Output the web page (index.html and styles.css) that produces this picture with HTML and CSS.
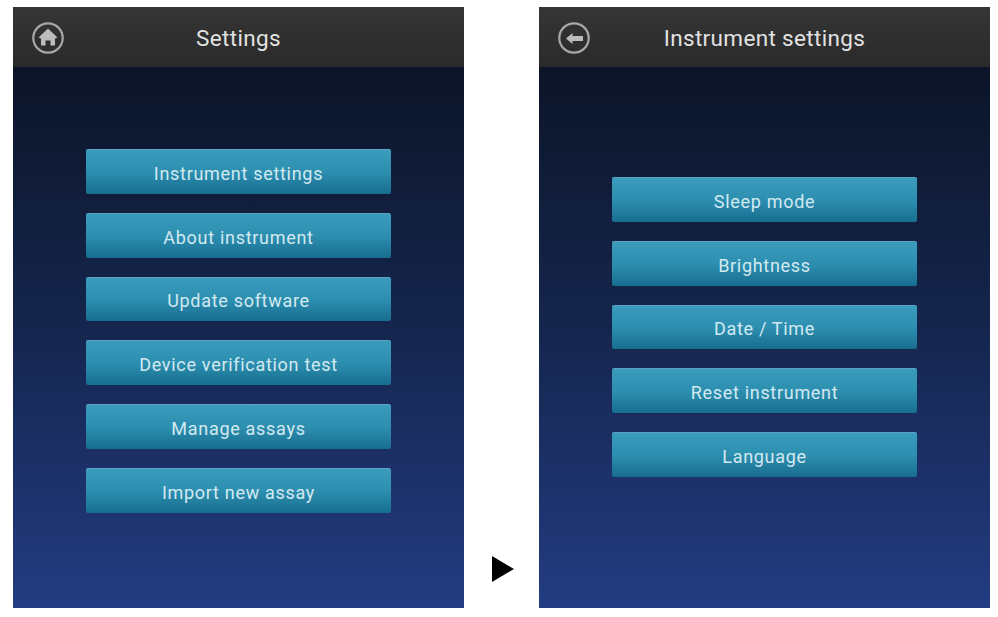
FILE: index.html
```html
<!DOCTYPE html>
<html>
<head>
	<title>Settings</title>
	<link rel="stylesheet" href="styles.css">
</head>
<body>
	<div class="screen">
		<div class="header">
			<svg class="icon" viewBox="0 0 32 32">
				<circle cx="16" cy="16" r="14.7"/>
				<path class="glyph" d="M16 6.5 L25.5 15.5 L23 16.5 L23 23.5 L18.5 23.5 L18.5 18.5 L13.5 18.5 L13.5 23.5 L9 23.5 L9 16.5 L6.5 15.5 Z"/>
			</svg>
			<h1>Settings</h1>
		</div>
		<div class="menu">
			<a class="btn">Instrument settings</a>
			<a class="btn">About instrument</a>
			<a class="btn">Update software</a>
			<a class="btn">Device verification test</a>
			<a class="btn">Manage assays</a>
			<a class="btn">Import new assay</a>
		</div>
	</div>

	<div class="arrow"></div>

	<div class="screen">
		<div class="header">
			<svg class="icon" viewBox="0 0 32 32">
				<circle cx="16" cy="16" r="14.7"/>
				<path class="glyph" d="M8 16.5 L14.5 11 L14.5 14 L25 14 L25 19 L14.5 19 L14.5 22 Z"/>
			</svg>
			<h1>Instrument settings</h1>
		</div>
		<div class="menu menu-short">
			<a class="btn">Sleep mode</a>
			<a class="btn">Brightness</a>
			<a class="btn">Date / Time</a>
			<a class="btn">Reset instrument</a>
			<a class="btn">Language</a>
		</div>
	</div>
</body>
</html>
```

FILE: styles.css
```css
body {
	font-family: Roboto, "Liberation Sans", sans-serif;
	margin: 0;
	padding: 7px 0 0 13px;
	background-color: #fff;
	display: flex;
}

.screen {
	width: 451px;
	height: 601px;
	display: flex;
	flex-direction: column;
}

.header {
	height: 60px;
	flex-shrink: 0;
	display: grid;
	grid-template-columns: 1fr auto 1fr;
	align-items: center;
	padding: 0 18.5px;
	background: linear-gradient(#353535, #2a2a2a);
}

.header h1 {
	margin: 2px 0 0;
	font-size: 22.5px;
	font-weight: 400;
	letter-spacing: 0.35px;
	color: #e2e2e2;
}

.icon {
	width: 32px;
	height: 32px;
	margin-top: 2px;
}

.icon circle {
	fill: none;
	stroke: #a8a8a8;
	stroke-width: 2.2;
}

.icon .glyph {
	fill: #bcbcbc;
}

.menu {
	flex: 1;
	display: flex;
	flex-direction: column;
	align-items: center;
	gap: 19px;
	padding-top: 82px;
	background: linear-gradient(#0c1528 0%, #15264f 50%, #233c82 100%);
}

.menu-short {
	padding-top: 110px;
}

.btn {
	width: 305px;
	height: 44.8px;
	box-sizing: border-box;
	padding-top: 3px;
	display: flex;
	align-items: center;
	justify-content: center;
	border-top: 1px solid #5aa3c2;
	border-radius: 2px;
	background: linear-gradient(#3a9bbd, #2d8fb0 50%, #176d8f);
	color: #d3e9f0;
	font-size: 18px;
	letter-spacing: 0.7px;
}

.arrow {
	width: 0;
	height: 0;
	margin: 549px 25px 0 28px;
	border-top: 13px solid transparent;
	border-bottom: 13px solid transparent;
	border-left: 22px solid #000;
}
```
